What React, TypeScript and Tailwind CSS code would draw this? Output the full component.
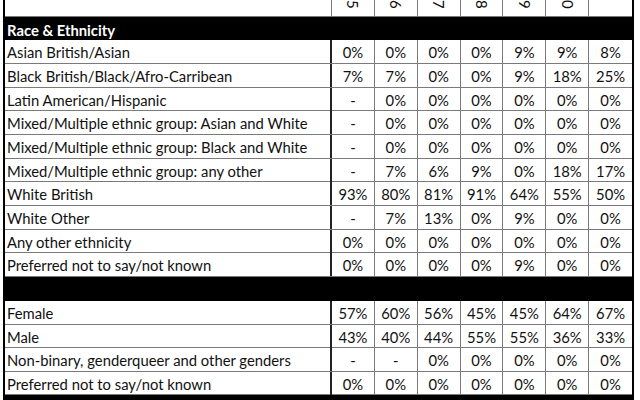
import React from "react";

const race: [string, string[]][] = [
  ["Asian British/Asian", ["0%", "0%", "0%", "0%", "9%", "9%", "8%"]],
  ["Black British/Black/Afro-Carribean", ["7%", "7%", "0%", "0%", "9%", "18%", "25%"]],
  ["Latin American/Hispanic", ["-", "0%", "0%", "0%", "0%", "0%", "0%"]],
  ["Mixed/Multiple ethnic group: Asian and White", ["-", "0%", "0%", "0%", "0%", "0%", "0%"]],
  ["Mixed/Multiple ethnic group: Black and White", ["-", "0%", "0%", "0%", "0%", "0%", "0%"]],
  ["Mixed/Multiple ethnic group: any other", ["-", "7%", "6%", "9%", "0%", "18%", "17%"]],
  ["White British", ["93%", "80%", "81%", "91%", "64%", "55%", "50%"]],
  ["White Other", ["-", "7%", "13%", "0%", "9%", "0%", "0%"]],
  ["Any other ethnicity", ["0%", "0%", "0%", "0%", "0%", "0%", "0%"]],
  ["Preferred not to say/not known", ["0%", "0%", "0%", "0%", "9%", "0%", "0%"]],
];

const gender: [string, string[]][] = [
  ["Female", ["57%", "60%", "56%", "45%", "45%", "64%", "67%"]],
  ["Male", ["43%", "40%", "44%", "55%", "55%", "36%", "33%"]],
  ["Non-binary, genderqueer and other genders", ["-", "-", "0%", "0%", "0%", "0%", "0%"]],
  ["Preferred not to say/not known", ["0%", "0%", "0%", "0%", "0%", "0%", "0%"]],
];

const years = ["2015", "2016", "2017", "2018", "2019", "2020", ""];

function Row({ label, vals, h }: { label: string; vals: string[]; h: string }) {
  return (
    <div className={`grid grid-cols-[327px_repeat(7,1fr)] border-b border-[#7a7a7a] ${h}`}>
      <div className="flex items-center pl-[2px] pt-[1px] border-r-2 border-[#222] whitespace-nowrap overflow-hidden">
        {label}
      </div>
      {vals.map((v, i) => (
        <div
          key={i}
          className={`flex items-center justify-center pt-[1px] ${i < 6 ? "border-r border-[#7a7a7a]" : ""}`}
        >
          {v}
        </div>
      ))}
    </div>
  );
}

export default function App() {
  return (
    <div className="w-[640px] h-[400px] bg-white overflow-hidden font-['Lato',sans-serif] text-[14.8px] text-[#111]">
      <div className="ml-[3px] w-[631px] border-l-2 border-r-2 border-black">
        <div className="grid grid-cols-[327px_repeat(7,1fr)] h-[17px] border-b border-[#7a7a7a]">
          <div className="border-r border-[#7a7a7a]" />
          {years.map((y, i) => (
            <div
              key={i}
              className={`flex flex-col items-center justify-end overflow-hidden pb-[7px] ${i < 6 ? "border-r border-[#7a7a7a]" : ""}`}
            >
              <span className="[writing-mode:vertical-rl] leading-none text-[15px] shrink-0">{y}</span>
            </div>
          ))}
        </div>
        <div className="h-[23px] bg-black text-white font-bold flex items-center pl-[2px] pt-[3px]">
          Race &amp; Ethnicity
        </div>
        {race.map(([l, v], i) => (
          <Row key={i} label={l} vals={v} h={i % 3 === 2 ? "h-[23px]" : "h-[24px]"} />
        ))}
        <div className="h-[24px] bg-black" />
        {gender.map(([l, v], i) => (
          <Row key={i} label={l} vals={v} h={i % 2 === 0 ? "h-[24px]" : "h-[23px]"} />
        ))}
        <div className="h-[24px] bg-black" />
      </div>
    </div>
  );
}
